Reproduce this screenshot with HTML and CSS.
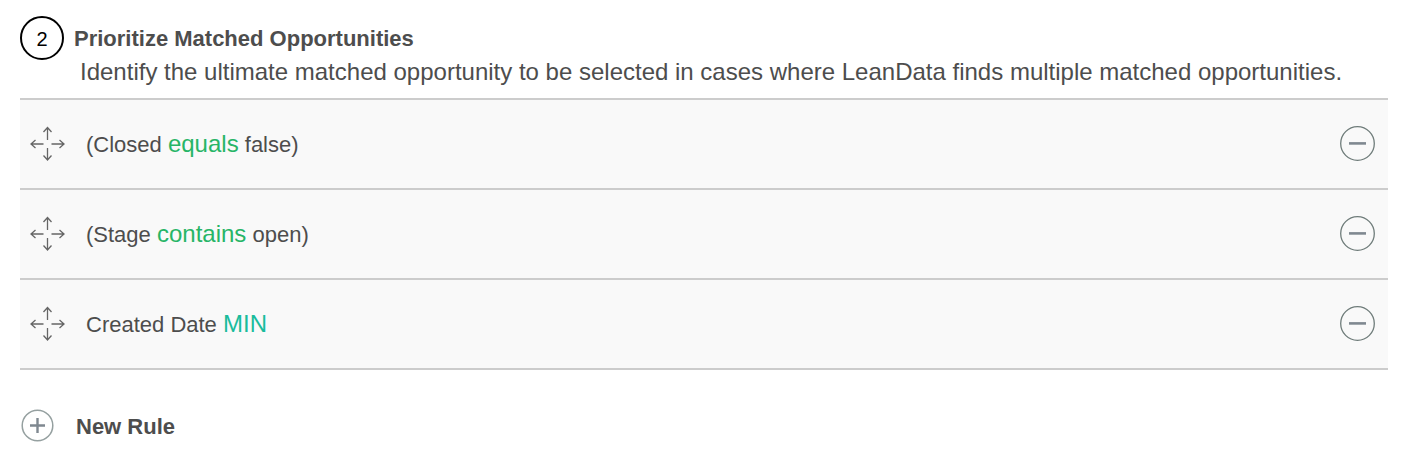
FILE: index.html
```html
<!DOCTYPE html>
<html lang="en">
<head>
<meta charset="utf-8">
<title>Prioritize Matched Opportunities</title>
<link rel="stylesheet" href="styles.css">
</head>
<body>
<svg class="sprite" width="0" height="0" aria-hidden="true">
  <symbol id="move" viewBox="0 0 36 36">
    <path d="M18.500 14V2M14.500 6L18.500 1.500L22.500 6M18.500 22V34M14.500 29.500L18.500 34L22.500 29.500M14.500 18H2.300M6.500 14L2 18L6.500 22M22.500 18H34.700M30.500 14L35 18L30.500 22"/>
  </symbol>
</svg>
<main class="section">
  <header class="header">
    <span class="step">2</span>
    <div class="heading">
      <h1 class="title">Prioritize Matched Opportunities</h1>
      <p class="description">Identify the ultimate matched opportunity to be selected in cases where LeanData finds multiple matched opportunities.</p>
    </div>
  </header>
  <ul class="rules">
    <li class="rule">
      <svg class="move"><use href="#move"/></svg>
      <span class="text">(Closed <span class="operator">equals</span> false)</span>
      <button class="remove" aria-label="Remove rule"><svg viewBox="0 0 36 36"><circle cx="17.500" cy="17.500" r="16.800"/><path d="M9 17.400H26"/></svg></button>
    </li>
    <li class="rule">
      <svg class="move"><use href="#move"/></svg>
      <span class="text">(Stage <span class="operator">contains</span> open)</span>
      <button class="remove" aria-label="Remove rule"><svg viewBox="0 0 36 36"><circle cx="17.500" cy="17.500" r="16.800"/><path d="M9 17.400H26"/></svg></button>
    </li>
    <li class="rule">
      <svg class="move"><use href="#move"/></svg>
      <span class="text">Created Date <span class="operator aggregate">MIN</span></span>
      <button class="remove" aria-label="Remove rule"><svg viewBox="0 0 36 36"><circle cx="17.500" cy="17.500" r="16.800"/><path d="M9 17.400H26"/></svg></button>
    </li>
  </ul>
  <div class="new-rule">
    <svg class="add" viewBox="0 0 34 34"><circle cx="16.500" cy="16.500" r="15.300"/><path d="M16.500 9V24M9 16.500H24"/></svg>
    <span class="new-label">New Rule</span>
  </div>
</main>
</body>
</html>
```
FILE: styles.css
```css
* { box-sizing: border-box; }
body {
  margin: 0;
  background: #fff;
  color: #4d4d4d;
  font-family: "Liberation Sans", Arial, sans-serif;
}
.sprite { display: block; }
.section { padding: 16px 26px 0 20px; }
.header { display: flex; height: 82px; }
.step {
  flex: none;
  display: flex;
  align-items: center;
  justify-content: center;
  width: 44px;
  height: 44px;
  padding-top: 2px;
  border: 2px solid #000;
  border-radius: 50%;
  color: #000;
  font-size: 20px;
}
.heading { padding: 8px 0 0 10px; white-space: nowrap; }
.title { margin: 0; font-size: 22px; line-height: 30px; }
.description { margin: 3px 0 0 6px; font-size: 24px; line-height: 30px; }
.rules { margin: 0; padding: 0; list-style: none; border-top: 2px solid #ccc; }
.rule {
  display: flex;
  align-items: center;
  height: 90px;
  padding: 0 12px 0 9px;
  background: #f9f9f9;
  border-bottom: 2px solid #ccc;
}
.move {
  width: 36px;
  height: 36px;
  fill: none;
  stroke: #666;
  stroke-width: 1.3;
}
.text { margin-left: 21px; font-size: 22px; line-height: 30px; }
.operator { font-size: 24px; color: #27b567; }
.aggregate { color: #1abc9c; }
.remove {
  width: 36px;
  height: 36px;
  margin-left: auto;
  padding: 0;
  border: 0;
  background: none;
}
.remove svg {
  display: block;
  width: 36px;
  height: 36px;
  fill: none;
  stroke: #6f7c7a;
  stroke-width: 1.3;
}
.remove path { stroke: #7f8890; stroke-width: 2.6; }
.new-rule { display: flex; align-items: center; padding: 39px 0 0 1px; }
.add { width: 34px; height: 34px; fill: none; stroke: #95a0a0; stroke-width: 1.5; }
.add path { stroke: #7f8890; stroke-width: 2.4; }
.new-label { margin-left: 21px; padding-top: 2px; font-size: 22px; font-weight: bold; }
```
